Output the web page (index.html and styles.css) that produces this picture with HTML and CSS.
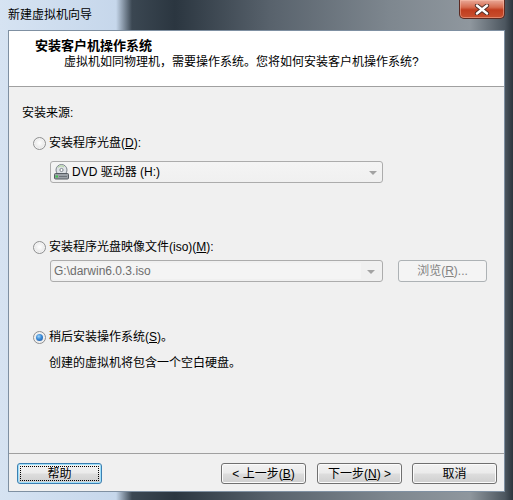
FILE: index.html
```html
<!DOCTYPE html>
<html lang="zh-CN">
<head>
    <meta charset="UTF-8">
    <meta name="viewport" content="width=device-width, initial-scale=1.0">
    <title>新建虚拟机向导</title>
    <link rel="stylesheet" href="styles.css">
</head>
<body>
    <div class="window">
        <div class="titlebar">
            <span class="title">新建虚拟机向导</span>
            <button class="close-btn">
                <svg width="16" height="11" viewBox="0 0 16 11">
                    <path d="M3 1.5 L13 9.5 M13 1.5 L3 9.5" stroke="#4a2a24" stroke-width="4.2" stroke-linecap="round"/>
                    <path d="M3 1.5 L13 9.5 M13 1.5 L3 9.5" stroke="#ffffff" stroke-width="2.4" stroke-linecap="round"/>
                </svg>
            </button>
        </div>

        <div class="client">
            <div class="header">
                <h1>安装客户机操作系统</h1>
                <p>虚拟机如同物理机，需要操作系统。您将如何安装客户机操作系统?</p>
            </div>

            <div class="content">
                <div class="section-label">安装来源:</div>

                <div class="option option-disc">
                    <label class="radio-row"><span class="radio"></span>安装程序光盘(<u>D</u>):</label>
                    <div class="combo combo-list">
                        <svg class="drive-icon" width="17" height="16" viewBox="0 0 17 16">
                            <circle cx="8.5" cy="6" r="5.5" fill="#dfe3e7" stroke="#7d858d"/>
                            <path d="M5 3.5 A4 4 0 0 1 11 3" stroke="#b7d6a8" stroke-width="1.2" fill="none"/>
                            <circle cx="8.5" cy="6" r="1.6" fill="#ffffff" stroke="#7d858d"/>
                            <rect x="1.5" y="9.5" width="14" height="5.5" rx="1" fill="#9ba1a7" stroke="#555b61"/>
                            <rect x="2.5" y="11.5" width="2.5" height="2" fill="#3ec24c"/>
                            <rect x="6" y="12" width="8" height="1" fill="#6d7379"/>
                        </svg>
                        <span class="combo-text">DVD 驱动器 (H:)</span>
                        <span class="arrow"></span>
                    </div>
                </div>

                <div class="option option-iso">
                    <label class="radio-row"><span class="radio"></span>安装程序光盘映像文件(iso)(<u>M</u>):</label>
                    <div class="iso-row">
                        <div class="combo combo-edit">
                            <span class="combo-field">G:\darwin6.0.3.iso</span>
                            <span class="arrow"></span>
                        </div>
                        <button class="btn btn-browse" disabled>浏览(<u>R</u>)...</button>
                    </div>
                </div>

                <div class="option option-later">
                    <label class="radio-row"><span class="radio checked"></span>稍后安装操作系统(<u>S</u>)。</label>
                    <p class="note">创建的虚拟机将包含一个空白硬盘。</p>
                </div>
            </div>

            <div class="footer">
                <button class="btn btn-focus">帮助</button>
                <button class="btn btn-back">&lt; 上一步(<u>B</u>)</button>
                <button class="btn">下一步(<u>N</u>) &gt;</button>
                <button class="btn">取消</button>
            </div>
        </div>
    </div>
</body>
</html>
```

FILE: styles.css
```css
* {
    margin: 0;
    padding: 0;
    box-sizing: border-box;
}

body {
    font-family: "Liberation Sans", "Noto Sans CJK SC", sans-serif;
    font-size: 12px;
    line-height: 16px;
    color: #000;
    background-color: #ffffff;
}

.window {
    width: 513px;
    height: 500px;
    display: flex;
    flex-direction: column;
    background: linear-gradient(to right, #d6e3f2 0, #c6d7eb 116px, #3b4752 132px, #2b3640 175px, #58626c 270px, #7e878f 390px, #8f979e 470px, #4c565f 505px, #2c353d 513px);
}

.titlebar {
    height: 30px;
    display: flex;
    justify-content: space-between;
    align-items: flex-start;
    padding: 0 8px;
}

.title {
    padding-top: 7px;
    color: #000;
}

.close-btn {
    width: 46px;
    height: 19px;
    display: flex;
    align-items: center;
    justify-content: center;
    border: 1px solid #5b2a22;
    border-top: none;
    border-radius: 0 0 5px 5px;
    background: linear-gradient(#e9a998 0, #d66c50 40%, #c13d1f 55%, #c8502f 100%);
    box-shadow: inset 0 0 0 1px rgba(255, 200, 180, 0.45);
}

.client {
    flex: 1;
    margin: 0 8px 8px;
    display: flex;
    flex-direction: column;
    background-color: #f0f0f0;
    border: 1px solid #7f90a2;
}

.header {
    background-color: #ffffff;
    border-bottom: 1px solid #a0a0a0;
    padding: 7px 0 16px 26px;
}

.header h1 {
    font-size: 13px;
    font-weight: bold;
    line-height: 16px;
}

.header p {
    margin-left: 29px;
}

.content {
    padding: 18px 0 0 13px;
}

.option {
    padding-left: 11px;
}

.option-disc {
    margin-top: 14px;
}

.option-iso {
    margin-top: 56px;
}

.option-later {
    margin-top: 47px;
}

.radio-row {
    display: flex;
    align-items: center;
    height: 16px;
}

.radio {
    width: 13px;
    height: 13px;
    margin-right: 3px;
    border-radius: 50%;
    border: 1px solid #8f9091;
    background: radial-gradient(circle at 50% 45%, #ffffff 0, #f2f2f2 35%, #d8d8d8 100%);
    box-shadow: inset 0 0 0 1px #f4f4f4;
    position: relative;
}

.radio.checked::after {
    content: "";
    position: absolute;
    left: 2px;
    top: 2px;
    width: 7px;
    height: 7px;
    border-radius: 50%;
    background: radial-gradient(circle at 40% 35%, #9fd4fa 0, #3a8ad6 45%, #1c4f9a 100%);
}

.combo {
    height: 22px;
    width: 333px;
    border: 1px solid #acacac;
    border-radius: 3px;
    display: flex;
    align-items: center;
}

.combo-list {
    margin: 10px 0 0 17px;
    padding-left: 2px;
    background: linear-gradient(#f4f4f4, #f0f0f0);
}

.drive-icon {
    margin-right: 2px;
}

.combo-text {
    flex: 1;
}

.arrow {
    width: 0;
    height: 0;
    margin: 1px 5px 0 6px;
    border-left: 4px solid transparent;
    border-right: 4px solid transparent;
    border-top: 4px solid #a3a3a3;
}

.iso-row {
    margin: 5px 0 0 17px;
    display: flex;
    gap: 15px;
}

.combo-edit {
    background-color: #f0f0f0;
    padding: 2px;
}

.combo-field {
    flex: 1;
    height: 16px;
    padding-left: 1px;
    background-color: #f4f4f4;
    color: #6d6d6d;
}

.note {
    margin: 10px 0 0 16px;
}

.footer {
    margin-top: auto;
    border-top: 1px solid #a0a0a0;
    padding: 9px 7px 7px 8px;
    display: flex;
    gap: 10px;
}

.btn {
    width: 85px;
    height: 21px;
    font-family: inherit;
    font-size: 12px;
    line-height: 16px;
    color: #000;
    border: 1px solid #707070;
    border-radius: 3px;
    background: linear-gradient(#f2f2f2 0, #ebebeb 48%, #dddddd 52%, #cfcfcf 100%);
    box-shadow: inset 0 0 0 1px #fbfbfb;
    position: relative;
}

.btn-back {
    margin-left: auto;
    margin-right: 1px;
}

.btn-focus {
    border-color: #3c7fb1;
    box-shadow: inset 0 0 0 1px #9fe0fb;
}

.btn-focus::after {
    content: "";
    position: absolute;
    inset: 2px;
    border: 1px dotted #000;
    border-radius: 1px;
}

.btn-browse {
    width: 89px;
    height: 22px;
    color: #838383;
    border-color: #adb2b5;
    background: #f4f4f4;
    box-shadow: none;
}
```
